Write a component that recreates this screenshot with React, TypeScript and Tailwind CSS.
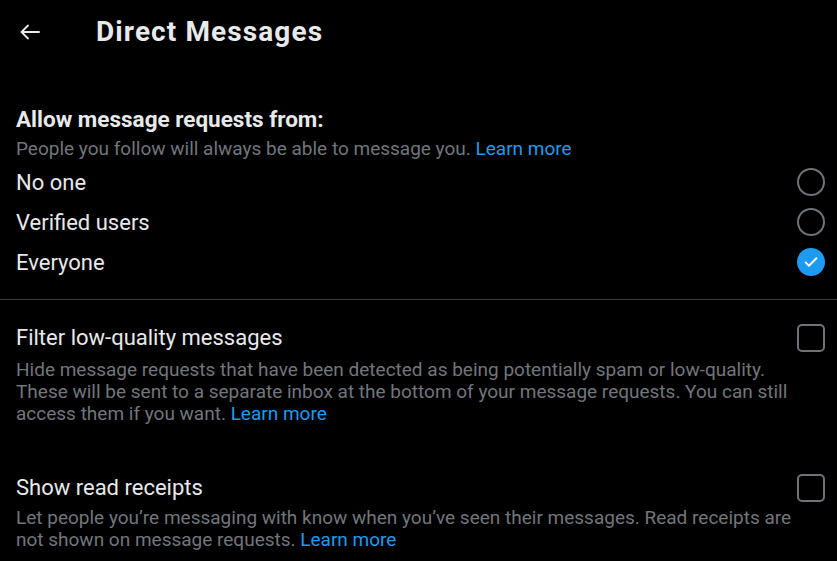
import React from "react";

function Radio({ checked }: { checked?: boolean }) {
  if (checked) {
    return (
      <div className="flex h-[28px] w-[28px] items-center justify-center rounded-full bg-[#1d9bf0]">
        <svg viewBox="0 0 24 24" className="h-[20px] w-[20px]" fill="none" stroke="white" strokeWidth="2.2" strokeLinecap="round" strokeLinejoin="round">
          <path d="M5.5 12.5l4 4L18.5 7.5" />
        </svg>
      </div>
    );
  }
  return <div className="h-[28px] w-[28px] rounded-full border-2 border-[#6e7276]" />;
}

function Checkbox() {
  return <div className="h-[28px] w-[28px] rounded-[5px] border-2 border-[#6e7276]" />;
}

const options = ["No one", "Verified users", "Everyone"];

export default function App() {
  return (
    <div className="h-[561px] w-[837px] overflow-hidden bg-black font-['Roboto',sans-serif] text-[#e7e9ea]">
      <header className="flex h-[64px] items-center pl-[18px]">
        <svg viewBox="0 0 24 24" className="h-[24px] w-[24px]" fill="none" stroke="#e7e9ea" strokeWidth="1.8" strokeLinecap="round" strokeLinejoin="round">
          <path d="M21 12H3.5M10 5.5L3.5 12l6.5 6.5" />
        </svg>
        <h1 className="ml-[54px] text-[28px] font-bold tracking-[1.1px]">Direct Messages</h1>
      </header>

      <section className="pl-[16px] pr-[12px] pt-[41px]">
        <h2 className="text-[22.5px] font-bold leading-[28px]">Allow message requests from:</h2>
        <p className="mt-[4px] text-[19px] leading-[24px] text-[#71767b]">
          People you follow will always be able to message you. <span className="text-[#1d9bf0]">Learn more</span>
        </p>
        <ul className="mt-[1px]">
          {options.map((o, i) => (
            <li key={o} className="flex h-[40px] items-center justify-between text-[22px]">
              <span>{o}</span>
              <Radio checked={i === 2} />
            </li>
          ))}
        </ul>
      </section>

      <div className="mt-[17px] h-px bg-[#3a3d40]" />

      <section className="pl-[16px] pr-[12px] pt-[24px]">
        <div className="flex items-center justify-between">
          <span className="text-[22px] leading-[28px]">Filter low-quality messages</span>
          <Checkbox />
        </div>
        <p className="mt-[7px] w-[785px] text-[19px] leading-[22px] text-[#71767b]">
          Hide message requests that have been detected as being potentially spam or low-quality. These will be sent to a separate inbox at the bottom of your message requests. You can still access them if you want. <span className="text-[#1d9bf0]">Learn more</span>
        </p>
      </section>

      <section className="pl-[16px] pr-[12px] pt-[49px]">
        <div className="flex items-center justify-between">
          <span className="text-[22px] leading-[28px]">Show read receipts</span>
          <Checkbox />
        </div>
        <p className="mt-[5px] w-[785px] text-[19px] leading-[22px] text-[#71767b]">
          Let people you’re messaging with know when you’ve seen their messages. Read receipts are not shown on message requests. <span className="text-[#1d9bf0]">Learn more</span>
        </p>
      </section>
    </div>
  );
}
